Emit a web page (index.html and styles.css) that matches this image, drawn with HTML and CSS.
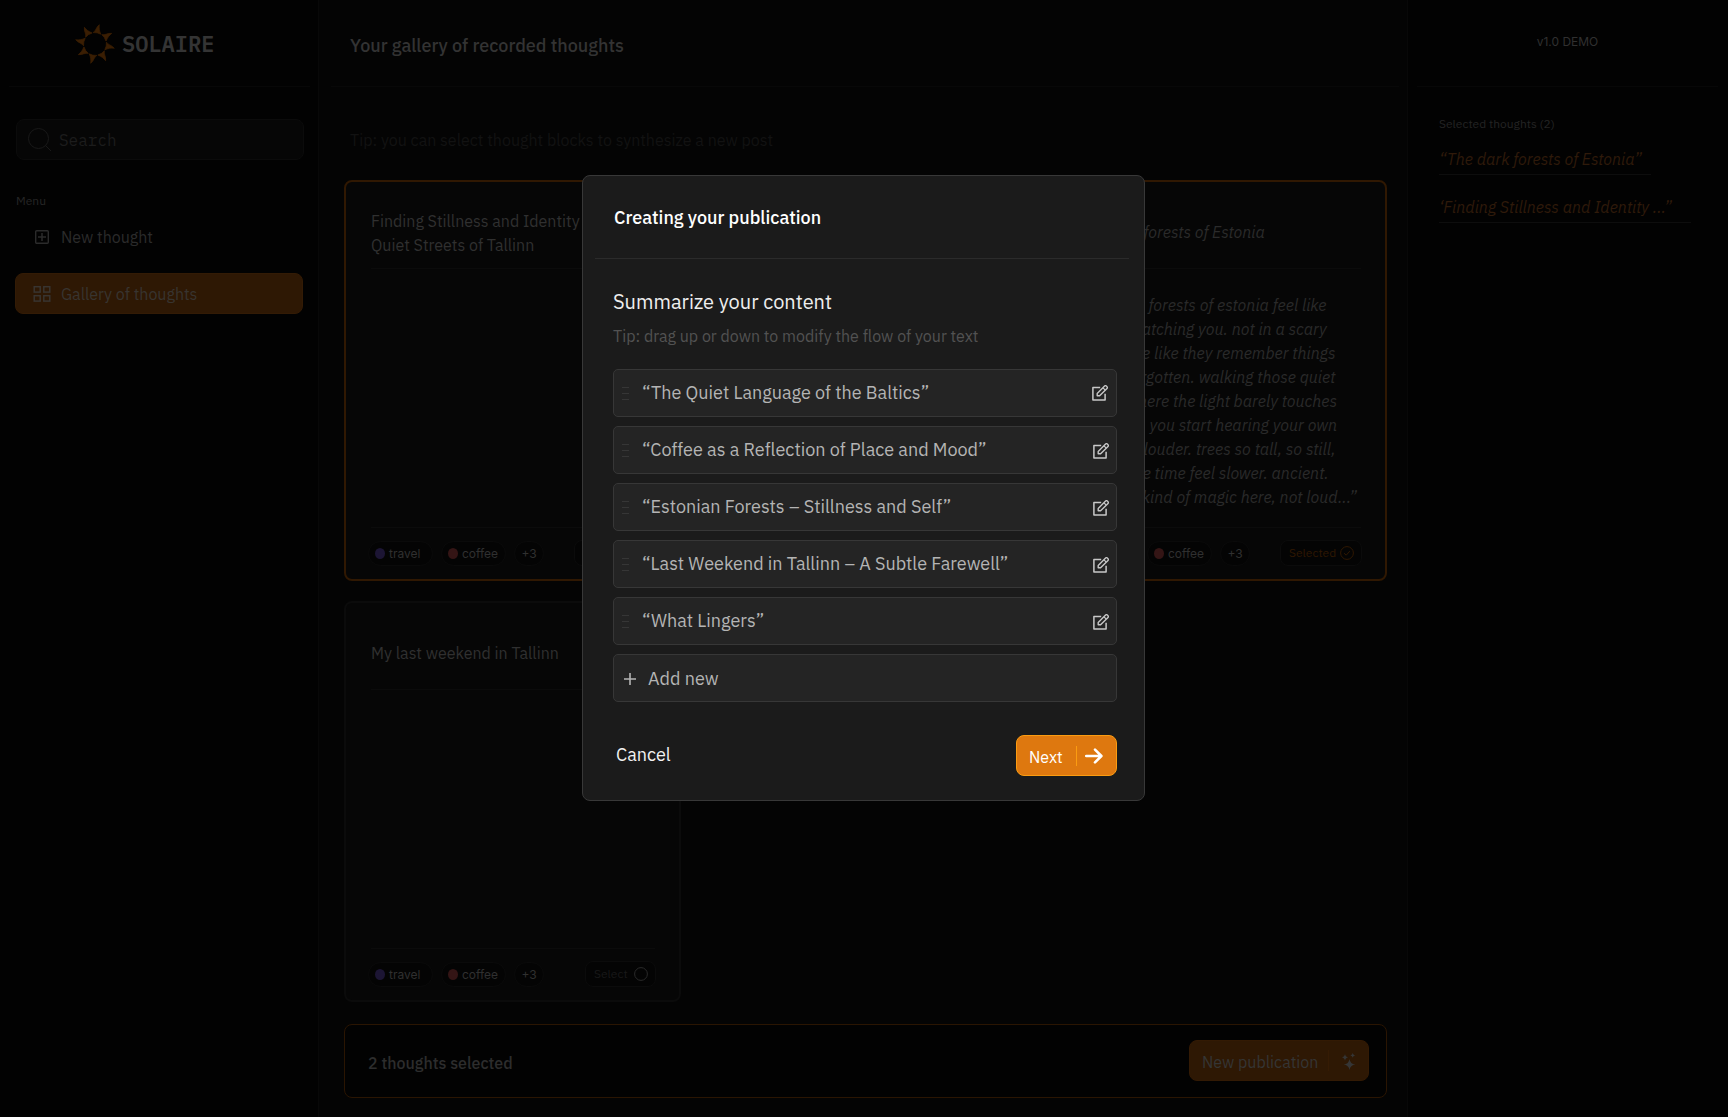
FILE: index.html
```html
<!DOCTYPE html>
<html lang="en">
<head>
<meta charset="utf-8">
<title>Solaire</title>
<link rel="stylesheet" href="styles.css">
</head>
<body>
<svg class="defs" width="0" height="0" aria-hidden="true">
  <symbol id="edit" viewBox="0 0 16 16"><path d="M8.2 2.6H.9V15H13.1V8.8" fill="none" stroke="currentColor" stroke-width="1.5" stroke-linejoin="round"/><path d="M5.2 10.8V8.4L12.6 1a1.2 1.2 0 0 1 1.7 0l.7.7a1.2 1.2 0 0 1 0 1.7L7.6 10.8Z" fill="none" stroke="currentColor" stroke-width="1.4" stroke-linejoin="round"/><path d="M11 2.8l2.2 2.2" stroke="currentColor" stroke-width="1.1"/></symbol>
  <symbol id="grip" viewBox="0 0 8 14"><path d="M0 1.5h7M0 7.5h7M0 13.5h7" stroke="currentColor" stroke-width="1"/></symbol>
</svg>
<div class="app">
  <aside class="side">
    <div class="brand">
      <svg class="sun" viewBox="-20 -20 40 40"><defs><path id="ray" d="M-4.2-10.8C-1.6-13-2.6-16.5.2-19.8C.4-16.5 1.4-14 3.6-10.8Q-.4-12-4.2-10.8Z"/></defs>
        <g fill="currentColor" stroke="currentColor" stroke-width=".7" stroke-linejoin="round" transform="rotate(12)"><use href="#ray"/><use href="#ray" transform="rotate(45)"/><use href="#ray" transform="rotate(90)"/><use href="#ray" transform="rotate(135)"/><use href="#ray" transform="rotate(180)"/><use href="#ray" transform="rotate(225)"/><use href="#ray" transform="rotate(270)"/><use href="#ray" transform="rotate(315)"/></g></svg>
      <span class="brand-name">SOLAIRE</span>
    </div>
    <div class="search">
      <svg viewBox="0 0 24 24"><circle cx="10.5" cy="10.5" r="10" fill="none" stroke="currentColor"/><path d="M17.5 17.5l5.5 5.5" stroke="currentColor"/></svg>
      <span>Search</span>
    </div>
    <div class="menu-label">Menu</div>
    <nav class="menu">
      <a class="item"><svg viewBox="0 0 18 18"><rect x="2.7" y="2.7" width="12.6" height="12.6" rx="1" fill="none" stroke="currentColor" stroke-width="1.4"/><path d="M9 5v8M5 9h8" stroke="currentColor" stroke-width="1.5"/></svg><span>New thought</span></a>
      <a class="item active"><svg viewBox="0 0 18 18"><g fill="none" stroke="currentColor" stroke-width="1.5"><rect x="1.2" y="1.7" width="6" height="5.4"/><rect x="10.8" y="1.7" width="6" height="5.4"/><rect x="1.2" y="10.7" width="6" height="5.4"/><rect x="10.8" y="10.7" width="6" height="5.4"/></g></svg><span>Gallery of thoughts</span></a>
    </nav>
  </aside>

  <main class="main">
    <header class="head"><h1>Your gallery of recorded thoughts</h1></header>
    <p class="tip">Tip: you can select thought blocks to synthesize a new post</p>
    <section class="grid">
      <article class="card on">
        <h2 class="two">Finding Stillness and Identity in the Quiet Streets of Tallinn</h2>
        <div class="body"></div>
        <footer><span class="tag"><i class="dot violet"></i>travel</span><span class="tag"><i class="dot red"></i>coffee</span><span class="tag more">+3</span><span class="pick">Selected<svg viewBox="0 0 14 14"><circle cx="7" cy="7" r="6.4"/><path d="M4 7.2l2.2 2 3.6-4"/></svg></span></footer>
      </article>
      <article class="card on third">
        <h2 class="it">The dark forests of Estonia</h2>
        <div class="body">“the dark forests of estonia feel like<br>they’re watching you. not in a scary<br>way. more like they remember things<br>you’ve forgotten. walking those quiet<br>paths, where the light barely touches<br>the moss, you start hearing your own<br>thoughts louder. trees so tall, so still,<br>they make time feel slower. ancient.<br>there’s a kind of magic here, not loud...”</div>
        <footer><span class="tag"><i class="dot violet"></i>travel</span><span class="tag"><i class="dot red"></i>coffee</span><span class="tag more">+3</span><span class="pick">Selected<svg viewBox="0 0 14 14"><circle cx="7" cy="7" r="6.4"/><path d="M4 7.2l2.2 2 3.6-4"/></svg></span></footer>
      </article>
      <article class="card">
        <h2>My last weekend in Tallinn</h2>
        <div class="body"></div>
        <footer><span class="tag"><i class="dot violet"></i>travel</span><span class="tag"><i class="dot red"></i>coffee</span><span class="tag more">+3</span><span class="pick off">Select<svg viewBox="0 0 14 14"><circle cx="7" cy="7" r="6.4"/></svg></span></footer>
      </article>
    </section>
    <div class="bar">
      <strong>2 thoughts selected</strong>
      <button class="publish"><span>New publication</span><i class="sep"></i><svg viewBox="0 0 18 20"><path fill="currentColor" d="M9.5 8Q10.3 13 15.3 13.5Q10.3 14 9.5 19Q8.7 14 3.7 13.5Q8.7 13 9.5 8ZM5 3Q5.4 6 8.2 6.4Q5.4 6.8 5 9.8Q4.6 6.8 1.8 6.4Q4.6 6 5 3ZM12.7 2Q13 4 15 4.4Q13 4.8 12.7 6.8Q12.4 4.8 10.4 4.4Q12.4 4 12.7 2Z"/></svg></button>
    </div>
  </main>

  <aside class="right">
    <div class="version">v1.0 DEMO</div>
    <div class="picked">
      <div class="picked-label">Selected thoughts (2)</div>
      <a class="p1">“The dark forests of Estonia”</a>
      <a class="p2">‘Finding Stillness and Identity ...”</a>
    </div>
  </aside>
</div>

<div class="overlay">
  <div class="modal">
    <div class="modal-head">Creating your publication</div>
    <div class="modal-body">
      <h3>Summarize your content</h3>
      <p class="hint">Tip: drag up or down to modify the flow of your text</p>
      <ul class="rows">
        <li><svg class="grip"><use href="#grip"/></svg><span>“The Quiet Language of the Baltics”</span><svg class="edit first"><use href="#edit"/></svg></li>
        <li><svg class="grip"><use href="#grip"/></svg><span>“Coffee as a Reflection of Place and Mood”</span><svg class="edit"><use href="#edit"/></svg></li>
        <li><svg class="grip"><use href="#grip"/></svg><span>“Estonian Forests – Stillness and Self”</span><svg class="edit"><use href="#edit"/></svg></li>
        <li><svg class="grip"><use href="#grip"/></svg><span>“Last Weekend in Tallinn – A Subtle Farewell”</span><svg class="edit"><use href="#edit"/></svg></li>
        <li><svg class="grip"><use href="#grip"/></svg><span>“What Lingers”</span><svg class="edit"><use href="#edit"/></svg></li>
        <li class="add"><svg viewBox="0 0 12 12"><path d="M6 0v12M0 6h12" stroke="currentColor" stroke-width="1.6"/></svg><span>Add new</span></li>
      </ul>
      <div class="actions">
        <button class="cancel">Cancel</button>
        <button class="next"><span>Next</span><i class="sep"></i><svg viewBox="0 0 18 16"><path d="M1.2 8h15M10 1.6L16.4 8L10 14.4" fill="none" stroke="currentColor" stroke-width="2.6" stroke-linecap="round" stroke-linejoin="round"/></svg></button>
      </div>
    </div>
  </div>
</div>
</body>
</html>
```
FILE: styles.css
```css
* { box-sizing: border-box; margin: 0; padding: 0; }
body { background: #020202; font: 400 16px/24px "IBM Plex Sans", Roboto, sans-serif; overflow: hidden; color: #303030; }
button { font: inherit; color: inherit; background: none; border: 0; }
svg { display: block; flex: none; }
.defs { position: absolute; }

.app { display: grid; grid-template-columns: 319px 1089px 320px; height: 1117px; }

/* left sidebar */
.side { border-right: 1px solid #080808; }
.brand { display: flex; align-items: center; gap: 7px; height: 87px; margin: 0 8px 0 9px; padding: 2px 0 0 66px; border-bottom: 1px solid #070707; }
.sun { width: 40px; height: 40px; color: #3a1e03; }
.brand-name { font: 600 22px/30px "IBM Plex Mono", "Liberation Mono", monospace; color: #343434; }
.search { display: flex; align-items: center; gap: 7px; width: 288px; height: 41px; margin: 32px 0 0 16px; padding-left: 11px; border: 1px solid #0b0b0b; border-radius: 8px; background: #060606; font-family: "IBM Plex Mono", "Liberation Mono", monospace; color: #1c1c1c; }
.search svg { width: 24px; height: 24px; color: #191919; }
.menu-label { margin: 33px 0 0 16px; font-size: 12px; line-height: 16px; color: #262626; }
.menu { display: flex; flex-direction: column; gap: 16px; margin: 7px 0 0 15px; }
.item { display: flex; align-items: center; gap: 10px; width: 288px; height: 41px; padding-left: 18px; border-radius: 8px; color: #2b2b2b; }
.item svg { width: 18px; height: 18px; }
.active { background: #2e1804; border: 1px solid #331b05; padding-left: 17px; color: #383430; }

/* gallery */
.main { display: flex; flex-direction: column; background: #040404; border-right: 1px solid #080808; }
.head { height: 87px; margin: 0 8px 0 12px; padding: 34px 0 0 19px; border-bottom: 1px solid #080808; }
h1 { font-size: 18px; line-height: 24px; font-weight: 500; color: #333; }
.tip { margin: 41px 0 0 31px; height: 52px; color: #121212; }
.grid { display: grid; grid-template-columns: repeat(3, 337px); grid-auto-rows: 401px; gap: 20px 16px; margin-left: 25px; }
.card { display: flex; flex-direction: column; padding: 0 24px 13px 25px; border: 2px solid #0b0b0b; border-radius: 8px; background: #060606; }
.card.on { border-color: #301802; }
.third { grid-column: 3; }
h2 { display: flex; align-items: center; height: 87px; padding-top: 14px; font-size: 16px; line-height: 24px; font-weight: 400; border-bottom: 1px solid #0b0b0b; color: #303030; }
.two { padding-top: 16px; }
.it { font-style: italic; color: #2b2b2b; }
.body { flex: 1; padding: 24px 0 0 1px; font-style: italic; color: #2a2a2a; white-space: nowrap; }
.card footer { display: flex; align-items: flex-end; gap: 8px; height: 39px; border-top: 1px solid #0b0b0b; }
.tag { display: flex; align-items: center; height: 25px; width: 65px; padding-left: 6px; border: 1px solid #0a0a0a; border-radius: 13px; background: #040404; font: 12px/16px Inter, sans-serif; color: #303030; }
.tag:first-child { margin-left: -3px; }
.more { width: 30px; padding: 0; justify-content: center; }
.dot { width: 10px; height: 11px; margin-right: 4px; border-radius: 50%; }
.violet { background: #1c1534; }
.red { background: #341515; }
.pick { display: flex; align-items: center; justify-content: space-between; width: 82px; height: 26px; margin: 0 -1px 0 auto; padding: 0 7px 0 8px; border: 1px solid #0b0b0b; border-radius: 8px; background: #040404; font-size: 12px; color: #301802; }
.pick svg { width: 14px; height: 14px; fill: none; stroke: currentColor; }
.off { width: 71px; color: #191919; }
.off svg { stroke: #2a2a2a; }
.bar { display: flex; align-items: center; justify-content: space-between; width: 1043px; height: 74px; margin: 22px 0 0 25px; padding: 0 17px 0 23px; border: 1px solid #2a1502; border-radius: 8px; background: #020202; }
.bar strong { font-weight: 500; padding-top: 4px; color: #2d2d2d; }
.publish { display: flex; align-items: center; width: 180px; height: 41px; margin-top: -1px; padding-left: 12px; border: 1px solid #331a04; border-radius: 8px; background: #2e1804; color: #353535; }
.publish span { width: 126px; text-align: left; padding-top: 2px; }
.publish .sep { width: 1px; height: 21px; background: #351b04; }
.publish svg { width: 18px; height: 20px; margin-left: 11px; }

/* right panel */
.version { height: 87px; margin: 0 10px 0 9px; padding-top: 34px; text-align: center; font: 12px/16px Inter, sans-serif; border-bottom: 1px solid #070707; }
.picked { display: flex; flex-direction: column; align-items: flex-start; padding: 29px 0 0 31px; }
.picked-label { font-size: 12px; line-height: 16px; margin-bottom: 15px; color: #242424; }
.picked a { height: 28px; margin-bottom: 20px; font-style: italic; border-bottom: 1px solid #0d0d0d; color: #2f1a0a; white-space: nowrap; }
.p1 { width: 212px; }
.p2 { width: 252px; }

/* dialog */
.overlay { position: absolute; inset: 0; display: flex; justify-content: center; align-items: flex-start; padding: 175px 1px 0 0; }
.modal { width: 563px; height: 626px; border: 1px solid #383838; border-radius: 8px; background: #1b1b1b; }
.modal-head { height: 83px; margin: 0 15px 0 12px; padding: 30px 0 0 19px; border-bottom: 1px solid #2b2b2b; font-size: 18px; font-weight: 500; color: #fff; }
.modal-body { padding: 29px 27px 0 30px; }
h3 { font-size: 20px; line-height: 28px; font-weight: 400; color: #eee; }
.hint { margin-top: 8px; color: #525252; }
.rows { display: flex; flex-direction: column; gap: 9px; margin-top: 21px; list-style: none; font-size: 18px; color: #b4b4b4; }
.rows li { display: flex; align-items: center; height: 48px; padding: 0 7px 0 8px; border: 1px solid #373737; border-radius: 5px; background: #242424; white-space: nowrap; }
.grip { width: 8px; height: 14px; margin-right: 12px; color: #363636; }
.edit { width: 16px; height: 16px; margin: 2px 0 0 auto; color: #c8c8c8; }
.first { margin: 0 1px 0 auto; }
.add svg { width: 12px; height: 12px; margin: 2px 12px 0 2px; }
.add span { padding-top: 2px; }
.actions { display: flex; justify-content: space-between; margin-top: 33px; color: #fff; }
.cancel { height: 24px; margin: 8px 0 0 3px; font-size: 18px; color: #f2f2f2; }
.next { display: flex; align-items: center; width: 101px; height: 41px; padding-left: 12px; border: 1px solid #fb9c11; border-radius: 8px; background: #de780f; }
.next span { width: 47px; padding-top: 2px; text-align: left; }
.next .sep { width: 1px; height: 20px; background: #fb9c11; }
.next svg { width: 18px; height: 16px; margin-left: 8px; }
```
